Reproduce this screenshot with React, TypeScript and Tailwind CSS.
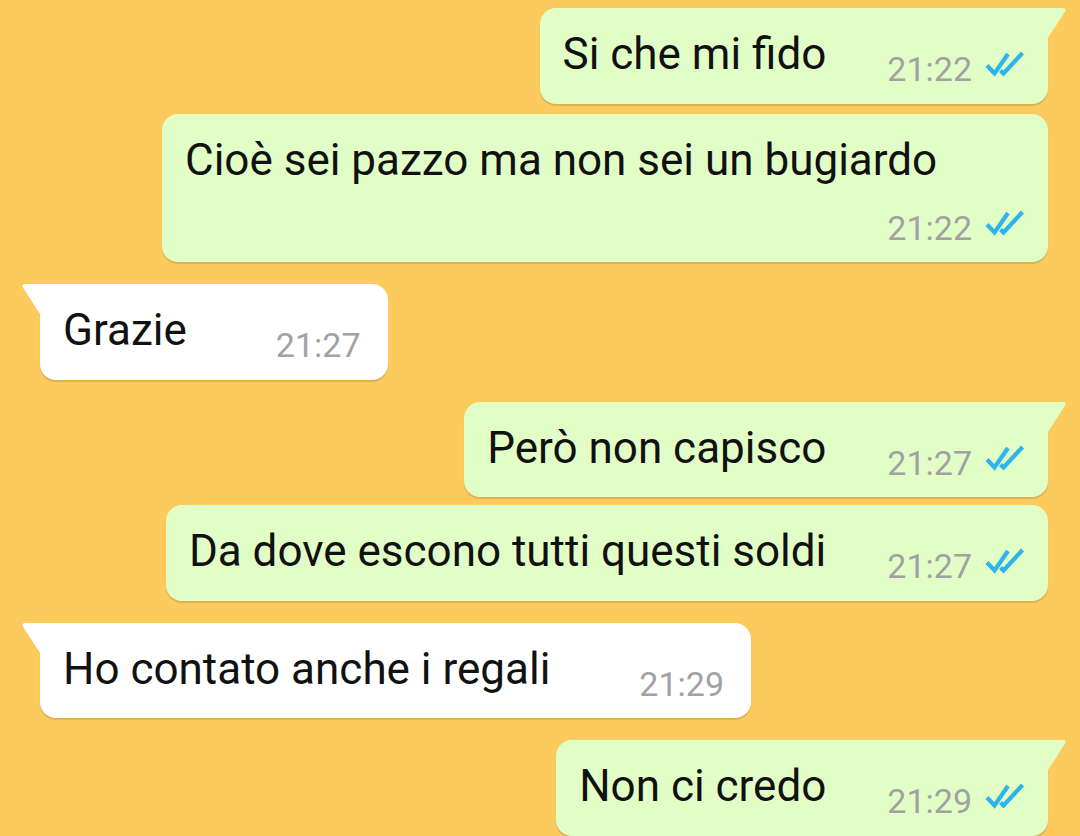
import React from "react";

type Msg = {
  text: string;
  time: string;
  out: boolean;
  tail?: boolean;
  wrap?: boolean;
  mt: string;
};

const messages: Msg[] = [
  { text: "Si che mi fido", time: "21:22", out: true, tail: true, mt: "mt-[8px]" },
  { text: "Cioè sei pazzo ma non sei un bugiardo", time: "21:22", out: true, wrap: true, mt: "mt-[10px]" },
  { text: "Grazie", time: "21:27", out: false, tail: true, mt: "mt-[22px]" },
  { text: "Però non capisco", time: "21:27", out: true, tail: true, mt: "mt-[22px]" },
  { text: "Da dove escono tutti questi soldi", time: "21:27", out: true, mt: "mt-[8px]" },
  { text: "Ho contato anche i regali", time: "21:29", out: false, tail: true, mt: "mt-[22px]" },
  { text: "Non ci credo", time: "21:29", out: true, tail: true, mt: "mt-[22px]" },
];

function Ticks() {
  return (
    <svg width="40" height="27" viewBox="0 0 40 27" className="ml-[13px] mt-[2px]">
      <path d="M2 14.5 L9.5 22.5 L23 3" fill="none" stroke="#2db4ec" strokeWidth="4.2" strokeLinejoin="miter" />
      <path d="M15.5 19.5 L18.5 22.5 L37.5 2" fill="none" stroke="#2db4ec" strokeWidth="4.2" strokeLinejoin="miter" />
    </svg>
  );
}

function Bubble({ m }: { m: Msg }) {
  const bg = m.out ? "bg-[#e2fec7]" : "bg-white";
  const corner = m.tail ? (m.out ? "rounded-tr-none" : "rounded-tl-none") : "";
  return (
    <div className={`${m.mt} ${m.out ? "self-end" : "self-start"} relative`}>
      {m.tail && (
        <svg
          width="22"
          height="34"
          viewBox="0 0 22 34"
          className={`absolute top-0 ${m.out ? "-right-[20px]" : "-left-[20px] -scale-x-100"}`}
        >
          <path d="M0 0 H16 Q21.5 0 18.5 4.5 L0 33 Z" fill={m.out ? "#e2fec7" : "#ffffff"} />
        </svg>
      )}
      <div
        className={`${bg} ${corner} rounded-[16px] shadow-[0_1.5px_1px_rgba(0,0,0,0.13)] pl-[23px] ${
          m.out ? "pr-[23px]" : "pr-[27px]"
        } pt-[16px] pb-[14.5px] ${m.wrap ? "flex flex-col w-[886px]" : "flex items-start"}`}
      >
        <span className="text-[44px] leading-[60px] text-[#111111] whitespace-nowrap">{m.text}</span>
        <div
          className={`flex items-start ${
            m.wrap ? "self-end mt-[18px]" : m.out ? "ml-[61px] mt-[25px]" : "ml-[89px] mt-[25px]"
          }`}
        >
          <span className="text-[34px] leading-[40px] text-[#a2a2a2]">{m.time}</span>
          {m.out && <Ticks />}
        </div>
      </div>
    </div>
  );
}

export default function App() {
  return (
    <div
      className="w-[1080px] h-[836px] overflow-hidden bg-[#fdca5e] flex flex-col pl-[40px] pr-[32px]"
      style={{ fontFamily: "Roboto, 'Noto Sans', sans-serif" }}
    >
      {messages.map((m, i) => (
        <Bubble key={i} m={m} />
      ))}
    </div>
  );
}
